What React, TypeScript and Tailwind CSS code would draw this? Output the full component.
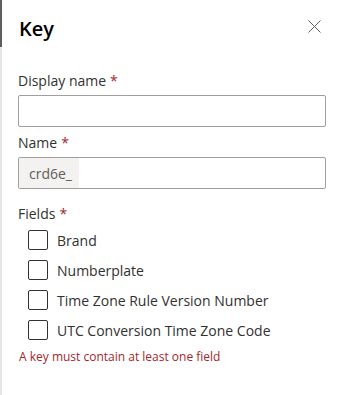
import React from "react";

const fields = [
  "Brand",
  "Numberplate",
  "Time Zone Rule Version Number",
  "UTC Conversion Time Zone Code",
];

const Label = ({ text, className = "" }: { text: string; className?: string }) => (
  <div className={`h-[30px] flex items-center text-[14px] text-[#323130] ${className}`}>
    {text}
    <span className="ml-[4px] text-[#a4262c]">*</span>
  </div>
);

export default function App() {
  return (
    <div
      className="w-[342px] h-[395px] flex bg-white"
      style={{ fontFamily: '"Open Sans", "Noto Sans", sans-serif' }}
    >
      <div className="w-[2px] h-full flex flex-col">
        <div className="h-[47px] bg-[#5e5e5e]" />
        <div className="flex-1 bg-[#e6e6e6]" />
      </div>
      <div className="flex-1 flex flex-col pl-[16px] pr-[16px]">
        <div className="h-[60px] pt-[14px] flex items-start justify-between">
          <h1 className="text-[20px] leading-[30px] font-semibold text-black pl-[1px]">Key</h1>
          <button className="mt-[6px] mr-[5px] w-[13px] h-[13px] text-[#605e5c]">
            <svg viewBox="0 0 13 13" className="w-[13px] h-[13px]" fill="none" stroke="currentColor" strokeWidth="1">
              <path d="M0.5 0.5 L12.5 12.5 M12.5 0.5 L0.5 12.5" />
            </svg>
          </button>
        </div>
        <Label text="Display name" className="mt-[5px]" />
        <div className="h-[32px] border border-[#a19f9d] rounded-[2px]" />
        <Label text="Name" />
        <div className="h-[32px] border border-[#a19f9d] rounded-[2px] flex overflow-hidden">
          <div className="w-[60px] h-full bg-[#f3f2f1] flex items-center pl-[10px] text-[14px] text-[#605e5c]">
            crd6e_
          </div>
        </div>
        <Label text="Fields" className="mt-[9px]" />
        <div className="flex flex-col gap-[10px] pl-[10px] mt-[2px]">
          {fields.map((f) => (
            <label key={f} className="flex items-center h-[20px]">
              <span className="w-[20px] h-[20px] border border-[#323130] rounded-[2px]" />
              <span className="ml-[9px] text-[14px] text-[#323130]">{f}</span>
            </label>
          ))}
        </div>
        <div className="mt-[9px] text-[12px] leading-[16px] text-[#a4262c] pl-[1px]">
          A key must contain at least one field
        </div>
      </div>
    </div>
  );
}
